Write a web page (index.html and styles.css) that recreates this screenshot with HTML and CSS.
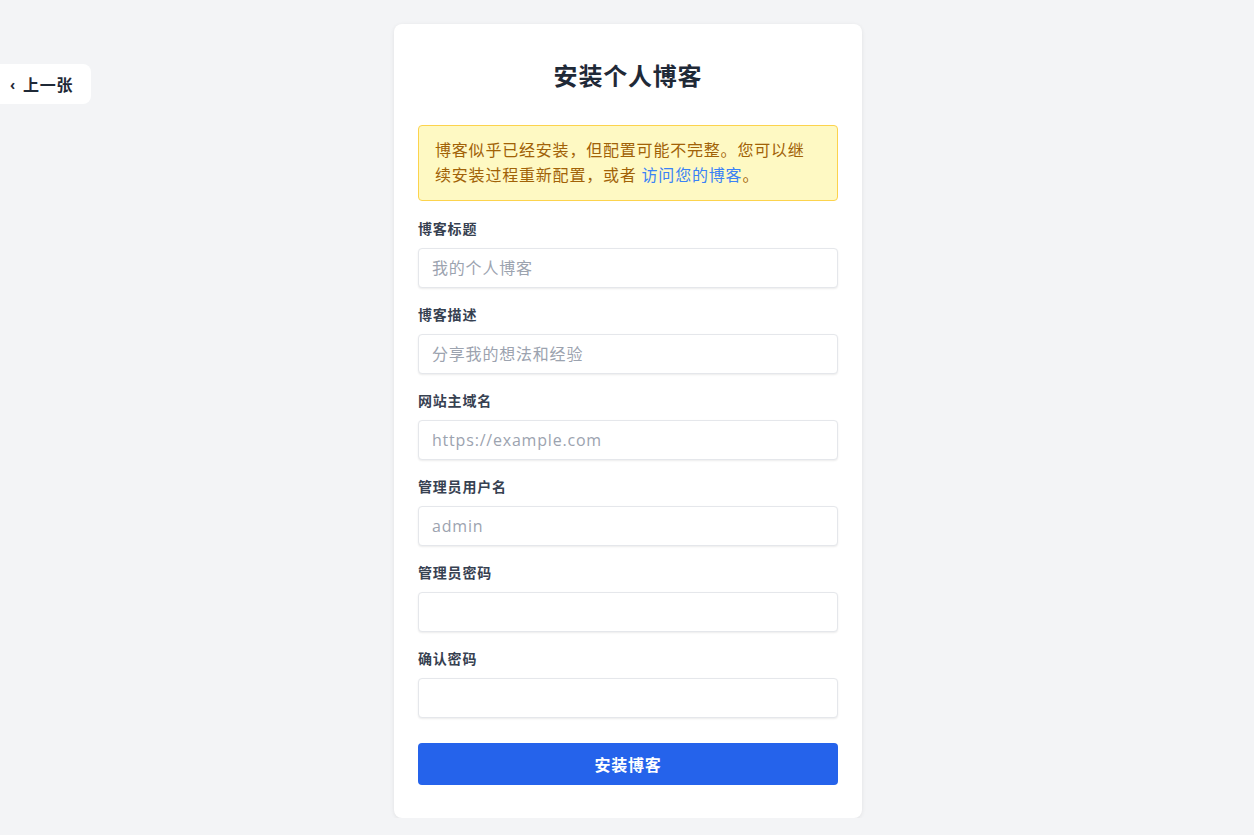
FILE: index.html
```html
<!DOCTYPE html>
<html>
	<head>
		<meta charset="UTF-8">
		<title>安装个人博客</title>
		<link rel="stylesheet" href="styles.css">
	</head>
	<body>
		<a href="javascript:;" class="prev_btn"><span class="chev">‹</span>上一张</a>
		<div class="card">
			<h1 class="title">安装个人博客</h1>
			<div class="alert">
				博客似乎已经安装，但配置可能不完整。您可以继续安装过程重新配置，或者 <a href="javascript:;">访问您的博客</a>。
			</div>
			<form class="form">
				<div class="field">
					<label>博客标题</label>
					<input type="text" placeholder="我的个人博客">
				</div>
				<div class="field">
					<label>博客描述</label>
					<input type="text" placeholder="分享我的想法和经验">
				</div>
				<div class="field">
					<label>网站主域名</label>
					<input type="text" placeholder="https://example.com">
				</div>
				<div class="field">
					<label>管理员用户名</label>
					<input type="text" placeholder="admin">
				</div>
				<div class="field">
					<label>管理员密码</label>
					<input type="password">
				</div>
				<div class="field">
					<label>确认密码</label>
					<input type="password">
				</div>
				<button type="button" class="submit">安装博客</button>
			</form>
		</div>
	</body>
</html>
```

FILE: styles.css
```css
*{
	padding: 0;
	margin: 0;
	box-sizing: border-box;
}
body{
	background: #f3f4f6;
	font-family: "Open Sans", "Noto Sans CJK SC", sans-serif;
	letter-spacing: 0.05em;
	color: #1f2937;
	padding: 24px 0 0 2px;
}
.prev_btn{
	position: absolute;
	left: -8px;
	top: 64px;
	height: 40px;
	width: 99px;
	padding-left: 18px;
	background: #fff;
	border-radius: 8px;
	display: flex;
	align-items: center;
	text-decoration: none;
	color: #1f2937;
	font-size: 16px;
	font-weight: 700;
}
.chev{
	font-size: 14px;
	margin-right: 7px;
	font-weight: 700;
}
.card{
	width: 468px;
	margin: 0 auto;
	background: #fff;
	border-radius: 8px;
	box-shadow: 0 1px 4px rgba(0,0,0,0.08);
	padding: 36px 24px 33px;
}
.title{
	text-align: center;
	font-size: 24px;
	line-height: 32px;
	font-weight: 700;
	color: #1f2937;
	margin-bottom: 33px;
}
.alert{
	background: #fef9c3;
	border: 1px solid #fcd34d;
	border-radius: 4px;
	padding: 12px 16px;
	font-size: 16px;
	line-height: 25px;
	color: #a16207;
	margin-bottom: 18px;
}
.alert a{
	color: #3b82f6;
	text-decoration: none;
}
.field{
	display: flex;
	flex-direction: column;
	margin-bottom: 17px;
}
.field label{
	font-size: 14px;
	line-height: 20px;
	font-weight: 700;
	color: #374151;
	margin-bottom: 9px;
}
.field input{
	height: 40px;
	border: 1px solid #e5e7eb;
	border-radius: 4px;
	box-shadow: 0 1px 2px rgba(0,0,0,0.08);
	padding: 0 13px;
	font-size: 16px;
	font-family: "Open Sans", "Noto Sans CJK SC", sans-serif;
	letter-spacing: 0.05em;
	color: #1f2937;
	outline: none;
}
.field input::placeholder{
	color: #9ca3af;
}
.submit{
	display: block;
	width: 100%;
	height: 42px;
	margin-top: 25px;
	background: #2563eb;
	border: none;
	border-radius: 4px;
	color: #fff;
	font-size: 16px;
	font-weight: 700;
	font-family: "Open Sans", "Noto Sans CJK SC", sans-serif;
	letter-spacing: 0.05em;
}
```
